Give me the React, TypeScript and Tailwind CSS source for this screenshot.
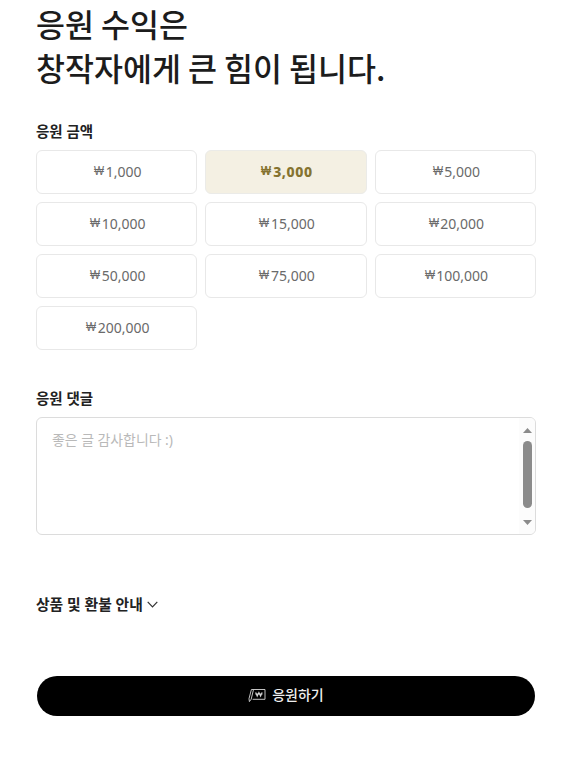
import { useState } from 'react';
import clsx from 'clsx';

// constants
const AMOUNTS = [1000, 3000, 5000, 10000, 15000, 20000, 50000, 75000, 100000, 200000];

function SupportIcon() {
  return (
    <svg width="18" height="16" viewBox="0 0 18 16" fill="none" stroke="#d8d8d8" strokeWidth="0.9">
      <path d="M5.2 2.5H17v9.8H4.6" />
      <path d="M3.4 2.5h2.1L3.2 12.2 1.4 14.6 1 11.7z" />
      <path d="M7.7 5.4l1.5 3.8 1.7-3.6 1.7 3.6 1.5-3.8M7.3 7h7.2" strokeWidth="1.1" />
    </svg>
  );
}

function ScrollBar() {
  return (
    <div className="flex w-4 flex-col items-center rounded-r-[5px] bg-[#fcfcfc] pt-2.5 pb-[9px]">
      <svg width="9" height="5" viewBox="0 0 9 5" fill="#8b8b8b">
        <path d="M4.5 0L9 5H0z" />
      </svg>
      <div className="mt-2 h-[67px] w-[9px] rounded-full bg-[#8b8b8b]" />
      <svg className="mt-auto" width="9" height="5" viewBox="0 0 9 5" fill="#8b8b8b">
        <path d="M0 0h9L4.5 5z" />
      </svg>
    </div>
  );
}

export default function App() {
  const [amount, setAmount] = useState(3000);
  const [comment, setComment] = useState('');

  return (
    <main className="min-h-screen bg-white pr-[34px] pl-9 font-['Noto_Sans','Noto_Sans_CJK_KR',sans-serif] text-[#222]">
      <h1 className="pt-px font-['Noto_Sans_CJK_KR',sans-serif] text-[31.5px] leading-[44px] font-medium text-[#1c1c1c]">
        응원 수익은
        <br />
        창작자에게 큰 힘이 됩니다.
      </h1>

      <section className="mt-8">
        <h2 className="text-[14.5px] leading-5 font-bold">응원 금액</h2>
        <div className="mt-[9.4px] grid grid-cols-3 gap-2">
          {AMOUNTS.map((value) => (
            <button
              key={value}
              type="button"
              onClick={() => setAmount(value)}
              className={clsx(
                'flex h-11 items-center justify-center rounded-[6px] border pb-px pl-px text-sm',
                value === amount
                  ? 'border-[#ebebe8] bg-[#f4f0e3] font-extrabold tracking-[0.6px] text-[#857330]'
                  : 'border-[#e8e8e8] bg-white text-[#6a6a6a]',
              )}
            >
              <span className="mr-px inline-block scale-x-[0.85] font-['Liberation_Sans',sans-serif] text-[12.5px] tracking-normal">
                ₩
              </span>
              {value.toLocaleString('en-US')}
            </button>
          ))}
        </div>
      </section>

      <section className="mt-[37.6px]">
        <h2 className="text-[14.5px] leading-5 font-bold">응원 댓글</h2>
        <div className="mt-[9.4px] flex h-[118px] rounded-[6px] border border-[#dcdcdc]">
          <textarea
            value={comment}
            onChange={(e) => setComment(e.target.value)}
            placeholder="좋은 글 감사합니다 :)"
            className="flex-1 resize-none px-[15px] py-3 text-[13.9px] leading-5 outline-none placeholder:text-[#b9b9b9]"
          />
          <ScrollBar />
        </div>
      </section>

      <button type="button" className="mt-[59px] flex h-5 items-center text-[14.8px] font-bold">
        상품 및 환불 안내
        <svg className="ml-1" width="11" height="7" viewBox="0 0 11 7" fill="none" stroke="#333" strokeWidth="1.2">
          <path d="M0.7 0.8l4.8 5 4.8-5" />
        </svg>
      </button>

      <button
        type="button"
        className="mt-[62px] ml-px flex h-10 w-[498px] items-center justify-center gap-1.5 rounded-full bg-black pb-0.5 text-sm font-medium text-[#eee]"
      >
        <SupportIcon />
        응원하기
      </button>
    </main>
  );
}
